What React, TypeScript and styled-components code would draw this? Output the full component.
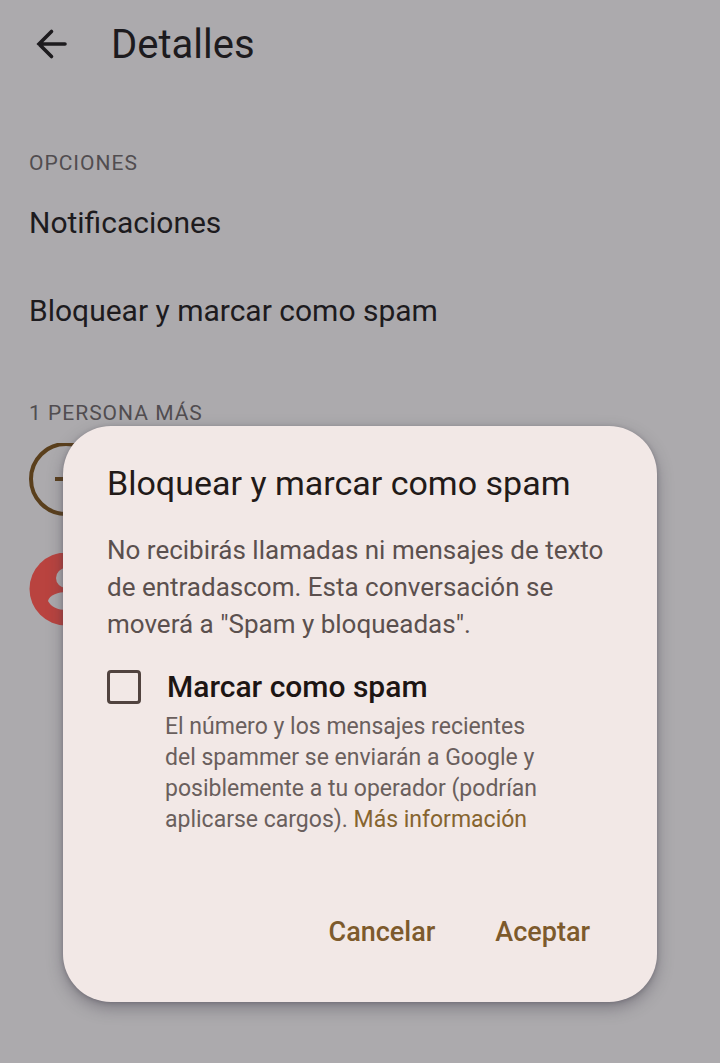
import { useState } from "react";
import styled, { createGlobalStyle } from "styled-components";

const GlobalStyle = createGlobalStyle`
  *, *::before, *::after { box-sizing: border-box; }
  body {
    margin: 0;
    background: #acaaad;
    font-family: Roboto, "Liberation Sans", sans-serif;
    color: #1d1b1e;
  }
  h1, h2, p, ul { margin: 0; padding: 0; font-weight: 400; }
`;

const Screen = styled.div`
  display: grid;
  grid-template-columns: minmax(0, 1fr);
`;

const Page = styled.main`
  grid-area: 1 / 1;
  display: flex;
  flex-direction: column;
`;

const TopBar = styled.header`
  display: flex;
  align-items: center;
  gap: 38px;
  height: 90px;
  padding: 0 29px;
`;

const BackButton = styled.button`
  display: flex;
  padding: 0;
  border: 0;
  background: none;
  color: inherit;
`;

const PageTitle = styled.h1`
  font-size: 40px;
  line-height: 48px;
`;

const Section = styled.section<{ $gap: number }>`
  display: flex;
  flex-direction: column;
  padding: ${(p) => p.$gap}px 29px 0;
`;

const SectionLabel = styled.h2`
  font-size: 21px;
  line-height: 24px;
  letter-spacing: 1px;
  color: #514d50;
`;

const Options = styled.ul`
  list-style: none;
  padding-top: 4px;
`;

const OptionButton = styled.button`
  display: block;
  width: 100%;
  height: 88px;
  padding: 0;
  border: 0;
  background: none;
  text-align: left;
  font: inherit;
  font-size: 30px;
  line-height: 36px;
  color: inherit;
`;

const People = styled.div`
  display: flex;
  flex-direction: column;
  gap: 36px;
  padding-top: 18px;
`;

const Avatar = styled.svg`
  display: block;
  width: 74px;
  height: 74px;
`;

const Overlay = styled.div`
  grid-area: 1 / 1;
  z-index: 1;
  padding: 426px 63px 61px;
`;

const Dialog = styled.div`
  display: flex;
  flex-direction: column;
  padding: 37px 44px 46px;
  border-radius: 48px;
  background: #f2e8e6;
  box-shadow: 0 6px 16px rgba(60, 56, 70, 0.4), 0 1px 4px rgba(60, 56, 70, 0.3);
`;

const DialogTitle = styled.h2`
  font-size: 34px;
  line-height: 40px;
  color: #221a18;
`;

const DialogText = styled.p`
  padding-top: 29px;
  font-size: 26px;
  line-height: 37px;
  color: #5b504e;
`;

const CheckRow = styled.div`
  display: grid;
  grid-template-columns: 34px minmax(0, 1fr);
  column-gap: 24px;
  align-items: center;
  padding-top: 26px;
`;

const CheckBox = styled.input`
  appearance: none;
  width: 34px;
  height: 34px;
  margin: 0;
  border: 3px solid #51433f;
  border-radius: 4px;
  background: transparent;
  &:checked { background: #51433f; }
`;

const CheckLabel = styled.label`
  padding-left: 2px;
  font-size: 30px;
  line-height: 36px;
  font-weight: 500;
  color: #1d1513;
`;

const CheckHint = styled.p`
  grid-column: 2;
  max-width: 380px;
  padding-top: 6px;
  font-size: 23px;
  line-height: 31px;
  color: #6a5f5d;
`;

const InfoLink = styled.a`
  color: #86642f;
  text-decoration: none;
`;

const Actions = styled.div`
  display: flex;
  justify-content: flex-end;
  gap: 60px;
  padding: 73px 23px 0 0;
`;

const ActionButton = styled.button`
  height: 48px;
  padding: 0;
  border: 0;
  background: none;
  font: inherit;
  font-size: 27px;
  font-weight: 500;
  color: #7d5a2c;
`;

const options = ["Notificaciones", "Bloquear y marcar como spam"];

export default function App() {
  const [spam, setSpam] = useState(false);
  return (
    <>
      <GlobalStyle />
      <Screen>
        <Page>
          <TopBar>
            <BackButton aria-label="Atrás">
              <svg
                width="44"
                height="44"
                viewBox="0 0 44 44"
                fill="none"
                stroke="currentColor"
                strokeWidth="3.6"
                strokeLinecap="round"
              >
                <path d="M36 21H10M22.500 8.500L10 21l12.500 12.500" />
              </svg>
            </BackButton>
            <PageTitle>Detalles</PageTitle>
          </TopBar>
          <Section $gap={61}>
            <SectionLabel>OPCIONES</SectionLabel>
            <Options>
              {options.map((option) => (
                <li key={option}>
                  <OptionButton>{option}</OptionButton>
                </li>
              ))}
            </Options>
          </Section>
          <Section $gap={46}>
            <SectionLabel>1 PERSONA MÁS</SectionLabel>
            <People>
              <Avatar viewBox="0 0 74 74" fill="none" stroke="#5a3f1c" strokeWidth="4">
                <circle cx="37" cy="36" r="35" />
                <path d="M26 36h22M37 25v22" />
              </Avatar>
              <Avatar viewBox="0 0 74 74">
                <circle cx="37" cy="36" r="36.500" fill="#b9433f" />
                <circle cx="37" cy="25" r="10" fill="#acaaad" />
                <path
                  d="M19 48C20 42 30 39 37 39s17 3 18 9c-3 6-10 9-18 9s-15-3-18-9Z"
                  fill="#acaaad"
                />
              </Avatar>
            </People>
          </Section>
        </Page>
        <Overlay>
          <Dialog role="dialog" aria-modal="true" aria-labelledby="dialog-title">
            <DialogTitle id="dialog-title">Bloquear y marcar como spam</DialogTitle>
            <DialogText>
              No recibirás llamadas ni mensajes de texto de entradascom. Esta conversación se moverá a "Spam y
              bloqueadas".
            </DialogText>
            <CheckRow>
              <CheckBox
                id="mark-spam"
                type="checkbox"
                checked={spam}
                onChange={(event) => setSpam(event.target.checked)}
              />
              <CheckLabel htmlFor="mark-spam">Marcar como spam</CheckLabel>
              <CheckHint>
                El número y los mensajes recientes del spammer se enviarán a Google y posiblemente a tu operador
                (podrían aplicarse cargos). <InfoLink href="#info">Más información</InfoLink>
              </CheckHint>
            </CheckRow>
            <Actions>
              <ActionButton>Cancelar</ActionButton>
              <ActionButton>Aceptar</ActionButton>
            </Actions>
          </Dialog>
        </Overlay>
      </Screen>
    </>
  );
}
